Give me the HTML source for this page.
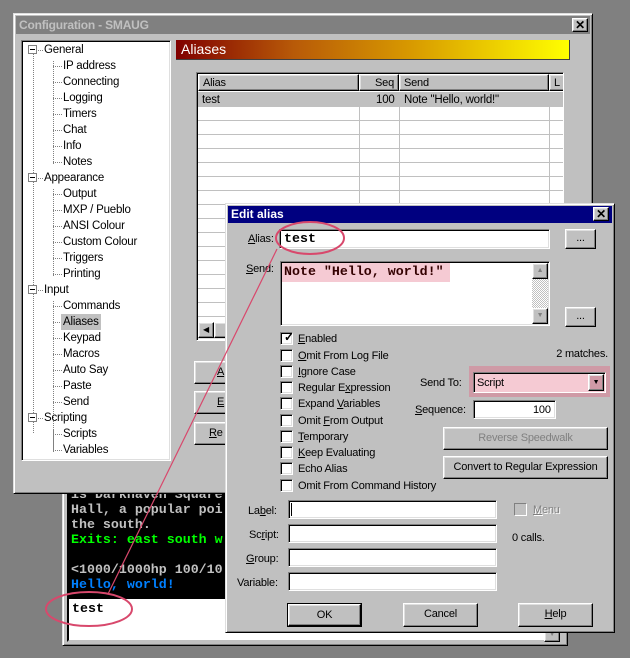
<!DOCTYPE html>
<html><head><meta charset="utf-8"><style>
*{margin:0;padding:0;box-sizing:border-box}
body{width:630px;height:658px;background:#808080;position:relative;overflow:hidden;font-family:"Liberation Sans",sans-serif;font-size:11px;letter-spacing:-0.2px;color:#000;line-height:14px}
.a{position:absolute}
.win{background:#c0c0c0;border:1px solid;border-color:#dfdfdf #000 #000 #dfdfdf;box-shadow:inset 1px 1px #fff,inset -1px -1px #808080}
.sunk{background:#fff;border:1px solid;border-color:#808080 #fff #fff #808080;box-shadow:inset 1px 1px #000,inset -1px -1px #dfdfdf}
.btn{background:#c0c0c0;border:1px solid;border-color:#fff #000 #000 #fff;box-shadow:inset -1px -1px #808080,inset 1px 1px #dfdfdf;text-align:center;white-space:nowrap}
.cb{position:absolute;width:13px;height:13px;background:#fff;border:1px solid;border-color:#808080 #fff #fff #808080;box-shadow:inset 1px 1px #000,inset -1px -1px #dfdfdf}
.cl{position:absolute;white-space:nowrap;line-height:15px;padding-top:1px}
.mono{font-family:"Liberation Mono",monospace;font-weight:bold;font-size:13.3px;letter-spacing:0;white-space:pre;line-height:15px}
.ti{position:absolute;white-space:nowrap;font-size:11.5px;line-height:15px;padding-top:1px}
.dot{position:absolute;border-left:1px dotted #808080}
.hd{position:absolute;border-top:1px dotted #808080;width:9px}
.box{position:absolute;width:9px;height:9px;border:1px solid #808080;background:#fff}
.box:after{content:"";position:absolute;left:1px;top:3px;width:5px;height:1px;background:#000}
.x{position:absolute;width:16px;height:14px;font-size:12px;font-weight:bold;line-height:12px}
u{text-decoration:underline}
.hl{position:absolute;left:0;right:0;border-top:1px solid #c0c0c0}
.vl{position:absolute;top:0;bottom:0;border-left:1px solid #c0c0c0}
</style></head><body>

<!-- MUD window behind -->
<div class="a win" style="left:62px;top:470px;width:506px;height:176px"></div>
<div class="a" style="left:67px;top:480px;width:494px;height:117px;background:#000;overflow:hidden">
<div class="mono a" style="left:4px;top:7px;color:#c0c0c0">is Darkhaven Square
Hall, a popular poi
the south.
<span style="color:#00ff00">Exits: east south w</span>

&lt;1000/1000hp 100/10
<span style="color:#0080ff">Hello, world!</span></div></div>
<div class="a" style="left:67px;top:597px;width:495px;height:45px;background:#fff;border:2px solid;border-color:#000 #c0c0c0 #c0c0c0 #000"></div>
<div class="mono a" style="left:72px;top:601px">test</div>
<div class="a btn" style="left:544px;top:628px;width:16px;height:14px;font-size:7px;color:#808080;line-height:12px">▼</div>

<!-- Config window -->
<div class="a win" style="left:13px;top:13px;width:580px;height:481px"></div>
<div class="a" style="left:16px;top:16px;width:574px;height:18px;background:#808080;color:#c0c0c0;font-weight:bold;font-size:12px;padding:2px 3px;line-height:14px">Configuration - SMAUG</div>
<div class="a btn x" style="left:572px;top:18px">✕</div>

<!-- tree -->
<div class="a sunk" style="left:21px;top:40px;width:150px;height:421px;overflow:hidden">
<div class="dot" style="left:11px;top:12px;height:380px"></div>
<div class="dot" style="left:31px;top:20px;height:103px"></div>
<div class="dot" style="left:31px;top:148px;height:87px"></div>
<div class="dot" style="left:31px;top:260px;height:151px"></div>
<div class="dot" style="left:31px;top:388px;height:22px"></div>
</div>
<div class="a" style="left:21px;top:40px;width:150px;height:421px">
<div class="box" style="left:7px;top:5px"></div><div class="hd" style="left:17px;top:10px;width:5px"></div><div class="ti" style="left:23px;top:2px">General</div>
<div class="hd" style="left:32px;top:26px"></div><div class="ti" style="left:42px;top:18px">IP address</div>
<div class="hd" style="left:32px;top:42px"></div><div class="ti" style="left:42px;top:34px">Connecting</div>
<div class="hd" style="left:32px;top:58px"></div><div class="ti" style="left:42px;top:50px">Logging</div>
<div class="hd" style="left:32px;top:74px"></div><div class="ti" style="left:42px;top:66px">Timers</div>
<div class="hd" style="left:32px;top:90px"></div><div class="ti" style="left:42px;top:82px">Chat</div>
<div class="hd" style="left:32px;top:106px"></div><div class="ti" style="left:42px;top:98px">Info</div>
<div class="hd" style="left:32px;top:122px"></div><div class="ti" style="left:42px;top:114px">Notes</div>
<div class="box" style="left:7px;top:133px"></div><div class="hd" style="left:17px;top:138px;width:5px"></div><div class="ti" style="left:23px;top:130px">Appearance</div>
<div class="hd" style="left:32px;top:154px"></div><div class="ti" style="left:42px;top:146px">Output</div>
<div class="hd" style="left:32px;top:170px"></div><div class="ti" style="left:42px;top:162px">MXP / Pueblo</div>
<div class="hd" style="left:32px;top:186px"></div><div class="ti" style="left:42px;top:178px">ANSI Colour</div>
<div class="hd" style="left:32px;top:202px"></div><div class="ti" style="left:42px;top:194px">Custom Colour</div>
<div class="hd" style="left:32px;top:218px"></div><div class="ti" style="left:42px;top:210px">Triggers</div>
<div class="hd" style="left:32px;top:234px"></div><div class="ti" style="left:42px;top:226px">Printing</div>
<div class="box" style="left:7px;top:245px"></div><div class="hd" style="left:17px;top:250px;width:5px"></div><div class="ti" style="left:23px;top:242px">Input</div>
<div class="hd" style="left:32px;top:266px"></div><div class="ti" style="left:42px;top:258px">Commands</div>
<div class="hd" style="left:32px;top:282px"></div><div class="ti" style="left:40px;top:274px;background:#c0c0c0;padding:1px 2px 0">Aliases</div>
<div class="hd" style="left:32px;top:298px"></div><div class="ti" style="left:42px;top:290px">Keypad</div>
<div class="hd" style="left:32px;top:314px"></div><div class="ti" style="left:42px;top:306px">Macros</div>
<div class="hd" style="left:32px;top:330px"></div><div class="ti" style="left:42px;top:322px">Auto Say</div>
<div class="hd" style="left:32px;top:346px"></div><div class="ti" style="left:42px;top:338px">Paste</div>
<div class="hd" style="left:32px;top:362px"></div><div class="ti" style="left:42px;top:354px">Send</div>
<div class="box" style="left:7px;top:373px"></div><div class="hd" style="left:17px;top:378px;width:5px"></div><div class="ti" style="left:23px;top:370px">Scripting</div>
<div class="hd" style="left:32px;top:394px"></div><div class="ti" style="left:42px;top:386px">Scripts</div>
<div class="hd" style="left:32px;top:410px"></div><div class="ti" style="left:42px;top:402px">Variables</div>
</div>

<!-- gradient header -->
<div class="a" style="left:176px;top:40px;width:394px;height:20px;background:linear-gradient(90deg,#800000,#b85a08 30%,#d89a00 60%,#ffff00);border-bottom:1px solid #404040;border-right:1px solid #404040;color:#fff;font-size:14px;letter-spacing:0;padding:1px 5px;line-height:17px">Aliases</div>

<!-- list -->
<div class="a" style="left:196px;top:72px;width:368px;height:269px;background:#fff;border:1px solid;border-color:#808080 #fff #fff #808080;box-shadow:inset 1px 1px #000;overflow:hidden">
 <div class="a" style="left:1px;top:1px;width:366px;height:17px;background:#c0c0c0"></div>
 <div class="a btn" style="left:1px;top:1px;width:161px;height:17px;text-align:left;padding:0 4px;line-height:16px">Alias</div>
 <div class="a btn" style="left:162px;top:1px;width:40px;height:17px;text-align:right;padding:0 4px;line-height:16px">Seq</div>
 <div class="a btn" style="left:202px;top:1px;width:150px;height:17px;text-align:left;padding:0 4px;line-height:16px">Send</div>
 <div class="a btn" style="left:352px;top:1px;width:30px;height:17px;text-align:left;padding:0 4px;line-height:16px">L</div>
 <div class="a" style="left:1px;top:19px;width:366px;height:15px;background:#c0c0c0"></div>
 <div class="ti" style="left:5px;top:19px">test</div><div class="ti" style="left:179px;top:19px">100</div><div class="ti" style="left:207px;top:19px">Note "Hello, world!"</div>
 <div class="a" style="left:1px;top:34px;width:366px;height:220px">
  <div class="hl" style="top:13px"></div><div class="hl" style="top:27px"></div><div class="hl" style="top:41px"></div><div class="hl" style="top:55px"></div><div class="hl" style="top:69px"></div><div class="hl" style="top:83px"></div><div class="hl" style="top:97px"></div><div class="hl" style="top:111px"></div><div class="hl" style="top:125px"></div><div class="hl" style="top:139px"></div><div class="hl" style="top:153px"></div><div class="hl" style="top:167px"></div><div class="hl" style="top:181px"></div><div class="hl" style="top:195px"></div><div class="hl" style="top:209px"></div>
  <div class="vl" style="left:161px"></div><div class="vl" style="left:201px"></div><div class="vl" style="left:351px"></div>
 </div>
 <div class="a" style="left:1px;top:249px;width:366px;height:17px;background:#dcdcdc"></div>
 <div class="a btn" style="left:1px;top:249px;width:16px;height:16px;font-size:8px;line-height:14px">◀</div>
 <div class="a btn" style="left:17px;top:249px;width:40px;height:16px"></div>
</div>

<div class="a btn" style="left:194px;top:361px;width:40px;height:23px;padding-left:22px;text-align:left;line-height:21px"><u>A</u></div>
<div class="a btn" style="left:194px;top:391px;width:40px;height:23px;padding-left:22px;text-align:left;line-height:21px"><u>E</u></div>
<div class="a btn" style="left:194px;top:422px;width:40px;height:23px;padding-left:14px;text-align:left;line-height:21px"><u>R</u>e</div>

<!-- Edit alias dialog -->
<div class="a win" style="left:225px;top:203px;width:390px;height:430px"></div>
<div class="a" style="left:228px;top:206px;width:384px;height:17px;background:#000080;color:#fff;font-weight:bold;padding:1px 3px;line-height:15px;font-size:12px;letter-spacing:0">Edit alias</div>
<div class="a btn x" style="left:593px;top:207px;height:14px">✕</div>

<div class="cl" style="left:248px;top:231px"><u>A</u>lias:</div>
<div class="a sunk" style="left:279px;top:229px;width:271px;height:20px"></div>
<div class="mono a" style="left:284px;top:231px">test</div>
<div class="a btn" style="left:565px;top:229px;width:31px;height:20px;line-height:16px">...</div>

<div class="cl" style="left:246px;top:261px"><u>S</u>end:</div>
<div class="a sunk" style="left:280px;top:261px;width:270px;height:65px"></div>
<div class="a" style="left:282px;top:263px;width:168px;height:19px;background:#f5cad3"></div>
<div class="mono a" style="left:284px;top:264px;color:#300">Note "Hello, world!"</div>
<div class="a" style="left:532px;top:263px;width:16px;height:61px;background:repeating-conic-gradient(#c0c0c0 0 25%,#fff 0 50%) 0 0/2px 2px"></div>
<div class="a btn" style="left:532px;top:263px;width:16px;height:16px;font-size:7px;color:#808080;line-height:14px">▲</div>
<div class="a btn" style="left:532px;top:308px;width:16px;height:16px;font-size:7px;color:#808080;line-height:14px">▼</div>
<div class="a btn" style="left:565px;top:307px;width:31px;height:20px;line-height:16px">...</div>

<div class="cb" style="left:280px;top:332px"></div><div class="cl" style="left:284px;top:329px;font-size:12px;font-weight:bold">✓</div><div class="cl" style="left:298px;top:331px"><u>E</u>nabled</div>
<div class="cb" style="left:280px;top:349px"></div><div class="cl" style="left:298px;top:348px"><u>O</u>mit From Log File</div>
<div class="cb" style="left:280px;top:365px"></div><div class="cl" style="left:298px;top:364px"><u>I</u>gnore Case</div>
<div class="cb" style="left:280px;top:381px"></div><div class="cl" style="left:298px;top:380px">Regular E<u>x</u>pression</div>
<div class="cb" style="left:280px;top:397px"></div><div class="cl" style="left:298px;top:396px">Expand <u>V</u>ariables</div>
<div class="cb" style="left:280px;top:414px"></div><div class="cl" style="left:298px;top:413px">Omit <u>F</u>rom Output</div>
<div class="cb" style="left:280px;top:430px"></div><div class="cl" style="left:298px;top:429px"><u>T</u>emporary</div>
<div class="cb" style="left:280px;top:446px"></div><div class="cl" style="left:298px;top:445px"><u>K</u>eep Evaluating</div>
<div class="cb" style="left:280px;top:462px"></div><div class="cl" style="left:298px;top:461px">Echo Alias</div>
<div class="cb" style="left:280px;top:479px"></div><div class="cl" style="left:298px;top:478px">Omit From Command History</div>

<div class="cl" style="right:22px;top:346px">2 matches.</div>
<div class="cl" style="left:420px;top:375px">Send To:</div>
<div class="a" style="left:469px;top:366px;width:141px;height:31px;background:#cf9aa6"></div>
<div class="a" style="left:473px;top:372px;width:133px;height:21px;background:#f5cad3;border:1px solid;border-color:#808080 #fff #fff #808080;box-shadow:inset 1px 1px #000"></div>
<div class="cl" style="left:477px;top:375px">Script</div>
<div class="a btn" style="left:588px;top:374px;width:16px;height:17px;font-size:7px;line-height:15px;background:#cf9aa6">▼</div>
<div class="cl" style="left:415px;top:402px"><u>S</u>equence:</div>
<div class="a sunk" style="left:473px;top:400px;width:83px;height:19px"></div>
<div class="cl" style="left:533px;top:402px">100</div>
<div class="a btn" style="left:443px;top:427px;width:165px;height:23px;line-height:21px"><span style="color:#808080">Reverse Speedwalk</span></div>
<div class="a btn" style="left:443px;top:456px;width:165px;height:23px;line-height:21px">Convert to Regular Expression</div>

<div class="cl" style="left:248px;top:503px">La<u>b</u>el:</div>
<div class="a sunk" style="left:288px;top:500px;width:209px;height:19px"></div>
<div class="a" style="left:291px;top:503px;width:1px;height:13px;background:#000"></div>
<div class="cl" style="left:249px;top:527px">Sc<u>r</u>ipt:</div>
<div class="a sunk" style="left:288px;top:524px;width:209px;height:19px"></div>
<div class="cl" style="left:246px;top:551px"><u>G</u>roup:</div>
<div class="a sunk" style="left:288px;top:548px;width:209px;height:19px"></div>
<div class="cl" style="left:237px;top:575px">Variable:</div>
<div class="a sunk" style="left:288px;top:572px;width:209px;height:19px"></div>
<div class="a" style="left:514px;top:503px;width:13px;height:13px;border:1px solid;border-color:#808080 #fff #fff #808080"></div>
<div class="cl" style="left:533px;top:502px;color:#808080;text-shadow:1px 1px #fff"><u>M</u>enu</div>
<div class="cl" style="left:512px;top:530px">0 calls.</div>

<div class="a" style="left:287px;top:603px;width:75px;height:24px;border:1px solid #000"><div class="btn" style="width:100%;height:100%;line-height:20px">OK</div></div>
<div class="a btn" style="left:403px;top:603px;width:75px;height:24px;line-height:21px">Cancel</div>
<div class="a btn" style="left:518px;top:603px;width:75px;height:24px;line-height:21px"><u>H</u>elp</div>

<!-- annotations -->
<svg class="a" style="left:0;top:0" width="630" height="658">
<g fill="none" stroke="#d8486c" stroke-width="2">
<ellipse cx="310" cy="238" rx="34" ry="16"/>
<ellipse cx="89" cy="609" rx="43" ry="17"/>
</g>
<line x1="277" y1="249" x2="108" y2="594" stroke="#d8486c" stroke-width="1.2"/>
</svg>
</body></html>
